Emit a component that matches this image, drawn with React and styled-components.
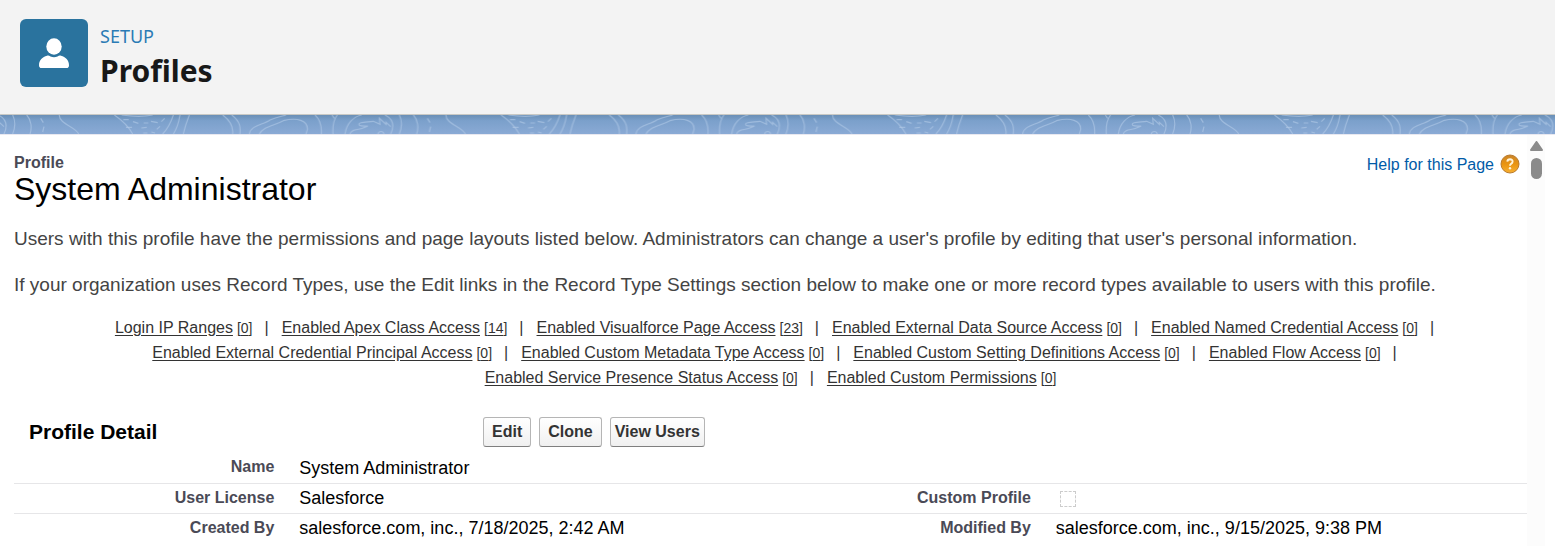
import React from "react";
import styled, { createGlobalStyle } from "styled-components";

const GlobalStyle = createGlobalStyle`
  * { box-sizing: border-box; }
  body {
    margin: 0;
    background: #fff;
    color: #000;
    font-family: "Liberation Sans", Arial, sans-serif;
  }
`;

const Page = styled.div`
  display: flex;
  flex-direction: column;
  height: 100vh;
  overflow: hidden;
`;

const SetupHeader = styled.header`
  display: flex;
  flex-shrink: 0;
  align-items: flex-start;
  gap: 12px;
  padding: 19px 20px 20px;
  background: #f3f3f3;
  border-bottom: 1px solid #c9c9c4;
`;

const IconTile = styled.div`
  display: flex;
  align-items: center;
  justify-content: center;
  width: 68px;
  height: 68px;
  border-radius: 6px;
  background: #2a739e;
`;

const HeaderText = styled.div`
  padding-top: 5px;
  font-family: "Noto Sans", "Open Sans", sans-serif;
`;

const Eyebrow = styled.div`
  font-size: 18px;
  line-height: 24px;
  color: #2b7bb5;
`;

const HeaderTitle = styled.h1`
  margin: 0;
  font-size: 30px;
  line-height: 46px;
  font-weight: 700;
  color: #181818;
`;

const Band = styled.div`
  flex-shrink: 0;
  height: 20px;
  border-bottom: 1px solid #e8e8f0;
  background: linear-gradient(#6a8fb6, #7ba0cb 30%, #8aaad5);
  svg { display: block; width: 100%; height: 19px; }
`;

const Panel = styled.div`
  display: flex;
  flex: 1;
  min-height: 0;
`;

const Content = styled.main`
  flex: 1;
  min-width: 0;
  padding: 18px 0 0 14px;
`;

const ScrollTrack = styled.div`
  display: flex;
  flex-direction: column;
  align-items: center;
  gap: 7px;
  width: 18px;
  margin-right: 10px;
  padding-top: 6px;
  background: #fcfcfc;
`;

const ScrollThumb = styled.div`
  width: 11px;
  height: 21px;
  border-radius: 6px;
  background: #8b8b8b;
`;

const TitleRow = styled.div`
  display: flex;
  justify-content: space-between;
  align-items: flex-start;
  padding-right: 7px;
`;

const Kind = styled.div`
  font-size: 16px;
  line-height: 20px;
  font-weight: 700;
  color: #4a4a56;
`;

const RecordName = styled.h2`
  margin: 0;
  font-size: 32px;
  line-height: 32px;
  font-weight: 400;
`;

const HelpLink = styled.a`
  display: flex;
  align-items: center;
  gap: 6px;
  font-size: 16px;
  line-height: 24px;
  color: #015ba7;
  text-decoration: none;
  svg { margin-bottom: 2px; }
`;

const Description = styled.p`
  margin: 0;
  padding-top: 22px;
  font-size: 19px;
  line-height: 24px;
  color: #444;
  white-space: nowrap;
`;

const LinkList = styled.nav`
  padding: 18px 0 26px;
  font-size: 16px;
  line-height: 25px;
  color: #333;
`;

const LinkLine = styled.div`
  display: flex;
  justify-content: center;
  height: 25px;
  padding-left: ${(p) => (p.$continues ? 8 : 0)}px;
  white-space: nowrap;
`;

const SectionLink = styled.a`
  display: flex;
  align-items: baseline;
  gap: 4px;
  color: #333;
  text-decoration: none;
`;

const LinkName = styled.span`
  text-decoration: underline;
  text-underline-offset: 2px;
`;

const Count = styled(LinkName)`
  font-size: 14px;
`;

const Separator = styled.span`
  padding: 0 13px 0 12px;
  &:last-child { padding-right: 0; }
`;

const DetailBar = styled.div`
  display: flex;
  align-items: center;
  height: 32px;
  margin-bottom: 5px;
`;

const DetailTitle = styled.h3`
  width: 31%;
  margin: 0;
  padding-left: 15px;
  font-size: 21px;
  line-height: 24px;
  font-weight: 700;
`;

const Buttons = styled.div`
  display: flex;
  gap: 8px;
`;

const Button = styled.button`
  height: 30px;
  padding: 0 ${(p) => (p.$tight ? 4 : 8)}px 1px;
  border: 1px solid #b5b5b5;
  border-bottom-color: #7f7f7f;
  border-radius: 3px;
  background: linear-gradient(#fff, #f0f0f0);
  color: #333;
  font-family: inherit;
  font-size: 16px;
  line-height: 20px;
  font-weight: 700;
`;

const DetailTable = styled.table`
  width: 100%;
  table-layout: fixed;
  border-collapse: collapse;
`;

const Row = styled.tr`
  height: 30px;
  & + & { border-top: 1px solid #e6e6e8; }
`;

const Label = styled.th`
  width: 18%;
  padding: 0 12px 1px 0;
  text-align: right;
  font-size: 16px;
  line-height: 20px;
  font-weight: 700;
  color: #4a4a56;
`;

const Value = styled.td`
  width: 32%;
  padding: 0 0 0 13px;
  font-size: 18px;
  line-height: 20px;
  white-space: nowrap;
`;

const CheckBox = styled.input`
  appearance: none;
  display: block;
  width: 16px;
  height: 16px;
  margin: 2px 0 0 4px;
  border: 1px dashed #ccc;
  background: #fff;
`;

const linkLines = [
  [
    ["Login IP Ranges", 0],
    ["Enabled Apex Class Access", 14],
    ["Enabled Visualforce Page Access", 23],
    ["Enabled External Data Source Access", 0],
    ["Enabled Named Credential Access", 0],
  ],
  [
    ["Enabled External Credential Principal Access", 0],
    ["Enabled Custom Metadata Type Access", 0],
    ["Enabled Custom Setting Definitions Access", 0],
    ["Enabled Flow Access", 0],
  ],
  [
    ["Enabled Service Presence Status Access", 0],
    ["Enabled Custom Permissions", 0],
  ],
];

function UserIcon() {
  return (
    <svg width="30" height="32" viewBox="0 0 30 32" fill="#fff" aria-hidden="true">
      <ellipse cx="15" cy="9.5" rx="7.7" ry="8.3" />
      <path d="M8 18.7C9.5 18.2 10.2 18.8 11.5 19.5Q15 20.8 18.5 19.5C19.8 18.8 20.5 18.2 22 18.7C26.5 20 30 22.8 30 28.2Q30 31 27.5 31H2.5Q0 31 0 28.2C0 22.8 3.5 20 8 18.7Z" />
    </svg>
  );
}

function TopographyBand() {
  return (
    <Band>
      <svg aria-hidden="true">
        <defs>
          <pattern id="topo" x="150" width="1160" height="57" patternUnits="userSpaceOnUse" patternTransform="scale(.33333)" patternContentUnits="userSpaceOnUse">
            <g fill="none" stroke="#b4cce8" strokeOpacity=".6" strokeWidth="3.5">
              <path d="M28 0C26 26 78 36 86 57M193 0Q230 25 248 57M215 0Q270 8 308 0M370 0Q358 36 338 57M390 0Q384 36 370 57M418 0Q406 30 400 57M518 0C545 20 550 40 548 57M545 0C572 20 572 40 570 57" />
              <path d="M598 57C602 30 640 30 660 15C680 5 700 3 708 0M795 0C812 15 815 40 814 57M628 57C640 35 670 33 700 17C740 7 775 15 772 45L768 57M862 0C850 15 848 40 849 57M846 0L853 10" />
              <path d="M885 57C890 25 910 5 935 0M900 57C905 40 925 47 945 37C965 29 940 37 928 31C922 20 950 22 970 19L990 28L988 10L1008 28L1008 22L1022 35M984 57C986 47 1000 47 1002 57M1005 0C1035 15 1030 40 1022 57M1048 0C1058 20 1055 40 1048 57M1090 0C1105 15 1106 40 1100 57" />
              <path d="M220 14h16M249 20l16 5M281 24h14M303 19l20 4M228 37h18M274 39l16-2M280 54h12M304 51l11 3M320 43l10-9M334 20l10-10M1132 10L1140 23M1142 35L1138 51" />
            </g>
          </pattern>
        </defs>
        <rect width="100%" height="19" fill="url(#topo)" />
      </svg>
    </Band>
  );
}

function HelpIcon() {
  return (
    <svg width="20" height="20" viewBox="0 0 20 20" aria-hidden="true">
      <defs>
        <linearGradient id="help" x1="0" y1="0" x2="0" y2="1">
          <stop offset="0" stopColor="#c9842a" />
          <stop offset=".5" stopColor="#ea9410" />
          <stop offset="1" stopColor="#f7b032" />
        </linearGradient>
      </defs>
      <circle cx="10" cy="10" r="9" fill="url(#help)" stroke="#b97a2c" />
      <path d="M7.3 7.7Q7.5 5.300 10 5.3Q12.7 5.4 12.6 7.6Q12.5 9 11 9.9Q10 10.6 10 11.8" fill="none" stroke="#fff3d8" strokeWidth="1.9" />
      <circle cx="10" cy="14.3" r="1.2" fill="#fff3d8" />
    </svg>
  );
}

export default function App() {
  return (
    <Page>
      <GlobalStyle />
      <SetupHeader>
        <IconTile><UserIcon /></IconTile>
        <HeaderText>
          <Eyebrow>SETUP</Eyebrow>
          <HeaderTitle>Profiles</HeaderTitle>
        </HeaderText>
      </SetupHeader>
      <TopographyBand />
      <Panel>
        <Content>
          <TitleRow>
            <div>
              <Kind>Profile</Kind>
              <RecordName>System Administrator</RecordName>
            </div>
            <HelpLink href="#help">Help for this Page<HelpIcon /></HelpLink>
          </TitleRow>
          <Description>
            Users with this profile have the permissions and page layouts listed below. Administrators can change a user's profile by editing that user's personal information.
          </Description>
          <Description>
            If your organization uses Record Types, use the Edit links in the Record Type Settings section below to make one or more record types available to users with this profile.
          </Description>
          <LinkList>
            {linkLines.map((line, i) => {
              const continues = i < linkLines.length - 1;
              return (
                <LinkLine key={i} $continues={continues}>
                  {line.map(([name, count], j) => (
                    <React.Fragment key={name}>
                      <SectionLink href="#section">
                        <LinkName>{name}</LinkName>
                        <Count>[{count}]</Count>
                      </SectionLink>
                      {(continues || j < line.length - 1) && <Separator>|</Separator>}
                    </React.Fragment>
                  ))}
                </LinkLine>
              );
            })}
          </LinkList>
          <DetailBar>
            <DetailTitle>Profile Detail</DetailTitle>
            <Buttons>
              <Button type="button">Edit</Button>
              <Button type="button">Clone</Button>
              <Button type="button" $tight>View Users</Button>
            </Buttons>
          </DetailBar>
          <DetailTable>
            <tbody>
              <Row>
                <Label scope="row">Name</Label>
                <Value>System Administrator</Value>
                <Label as="td" />
                <Value />
              </Row>
              <Row>
                <Label scope="row">User License</Label>
                <Value>Salesforce</Value>
                <Label scope="row"><label htmlFor="custom">Custom Profile</label></Label>
                <Value><CheckBox id="custom" type="checkbox" disabled /></Value>
              </Row>
              <Row>
                <Label scope="row">Created By</Label>
                <Value>salesforce.com, inc., 7/18/2025, 2:42 AM</Value>
                <Label scope="row">Modified By</Label>
                <Value>salesforce.com, inc., 9/15/2025, 9:38 PM</Value>
              </Row>
            </tbody>
          </DetailTable>
        </Content>
        <ScrollTrack>
          <svg width="13" height="10" viewBox="0 0 13 10" aria-hidden="true">
            <path d="M6.5 1L12 9H1Z" fill="#8b8b8b" stroke="#8b8b8b" strokeWidth="2" strokeLinejoin="round" />
          </svg>
          <ScrollThumb />
        </ScrollTrack>
      </Panel>
    </Page>
  );
}
